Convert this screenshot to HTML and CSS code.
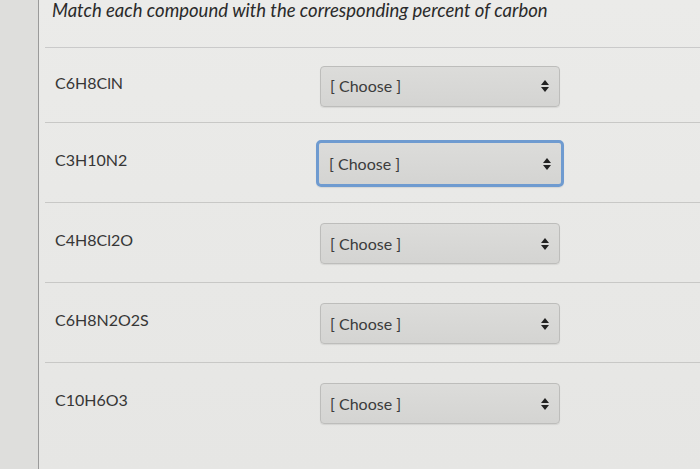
FILE: index.html
```html
<!DOCTYPE html>
<html>
<head>
<meta charset="utf-8">
<link rel="stylesheet" href="styles.css">
</head>
<body>
<div class="page">
  <div class="gutter"></div>
  <div class="main">
    <div class="title">Match each compound with the corresponding percent of carbon</div>
    <div class="row first">
      <div class="label">C6H8ClN</div>
      <div class="select"><span>[ Choose ]</span><svg class="arrows" width="8" height="12" viewBox="0 0 8 12"><path d="M4 0 L8 5 L0 5 Z M4 12 L8 7 L0 7 Z" fill="#222"/></svg></div>
    </div>
    <div class="row">
      <div class="label">C3H10N2</div>
      <div class="select focus"><span>[ Choose ]</span><svg class="arrows" width="8" height="12" viewBox="0 0 8 12"><path d="M4 0 L8 5 L0 5 Z M4 12 L8 7 L0 7 Z" fill="#222"/></svg></div>
    </div>
    <div class="row">
      <div class="label">C4H8Cl2O</div>
      <div class="select"><span>[ Choose ]</span><svg class="arrows" width="8" height="12" viewBox="0 0 8 12"><path d="M4 0 L8 5 L0 5 Z M4 12 L8 7 L0 7 Z" fill="#222"/></svg></div>
    </div>
    <div class="row">
      <div class="label">C6H8N2O2S</div>
      <div class="select"><span>[ Choose ]</span><svg class="arrows" width="8" height="12" viewBox="0 0 8 12"><path d="M4 0 L8 5 L0 5 Z M4 12 L8 7 L0 7 Z" fill="#222"/></svg></div>
    </div>
    <div class="row last">
      <div class="label">C10H6O3</div>
      <div class="select"><span>[ Choose ]</span><svg class="arrows" width="8" height="12" viewBox="0 0 8 12"><path d="M4 0 L8 5 L0 5 Z M4 12 L8 7 L0 7 Z" fill="#222"/></svg></div>
    </div>
  </div>
</div>
</body>
</html>
```
FILE: styles.css
```css
html, body {
  margin: 0;
  padding: 0;
}
body {
  background: #e5e5e3;
  font-family: Lato, "Open Sans", sans-serif;
  color: #333;
  width: 700px;
  height: 469px;
  overflow: hidden;
}
.page {
  display: flex;
  height: 469px;
}
.gutter {
  width: 38px;
  flex: none;
  background: #dededc;
}
.main {
  flex: 1;
  border-left: 1px solid #9a9a9a;
  background: linear-gradient(#ebebe9, #e6e6e4);
}
.title {
  height: 47px;
  font-style: italic;
  font-size: 18.5px;
  line-height: 20px;
  color: #2a2a2a;
  border-bottom: 1px solid #cacaca;
  margin-left: 6px;
  padding-left: 7px;
}
.row {
  display: flex;
  align-items: center;
  height: 79px;
  border-bottom: 1px solid #c8c8c6;
  margin-left: 6px;
}
.row.first {
  height: 74px;
}
.row.last {
  border-bottom: none;
}
.label {
  width: 265px;
  padding-left: 10px;
  font-size: 16px;
  color: #363636;
  margin-top: -6px;
}
.select {
  width: 240px;
  height: 41px;
  box-sizing: border-box;
  display: flex;
  align-items: center;
  justify-content: space-between;
  padding: 0 10px 0 9px;
  background: linear-gradient(#dcdcda, #d4d4d2);
  border: 1px solid #bdbdbb;
  border-radius: 4px;
  box-shadow: 0 1px 1px rgba(0,0,0,0.08);
  font-size: 16px;
  color: #3c3c3c;
  margin-top: 2px;
}
.select span {
  margin-top: -1px;
}
.select.focus {
  width: 248px;
  height: 47px;
  margin-left: -4px;
  border: 3px solid #6f9bd0;
  border-radius: 5px;
  padding-left: 10px;
}
.arrows {
  display: block;
}
```
